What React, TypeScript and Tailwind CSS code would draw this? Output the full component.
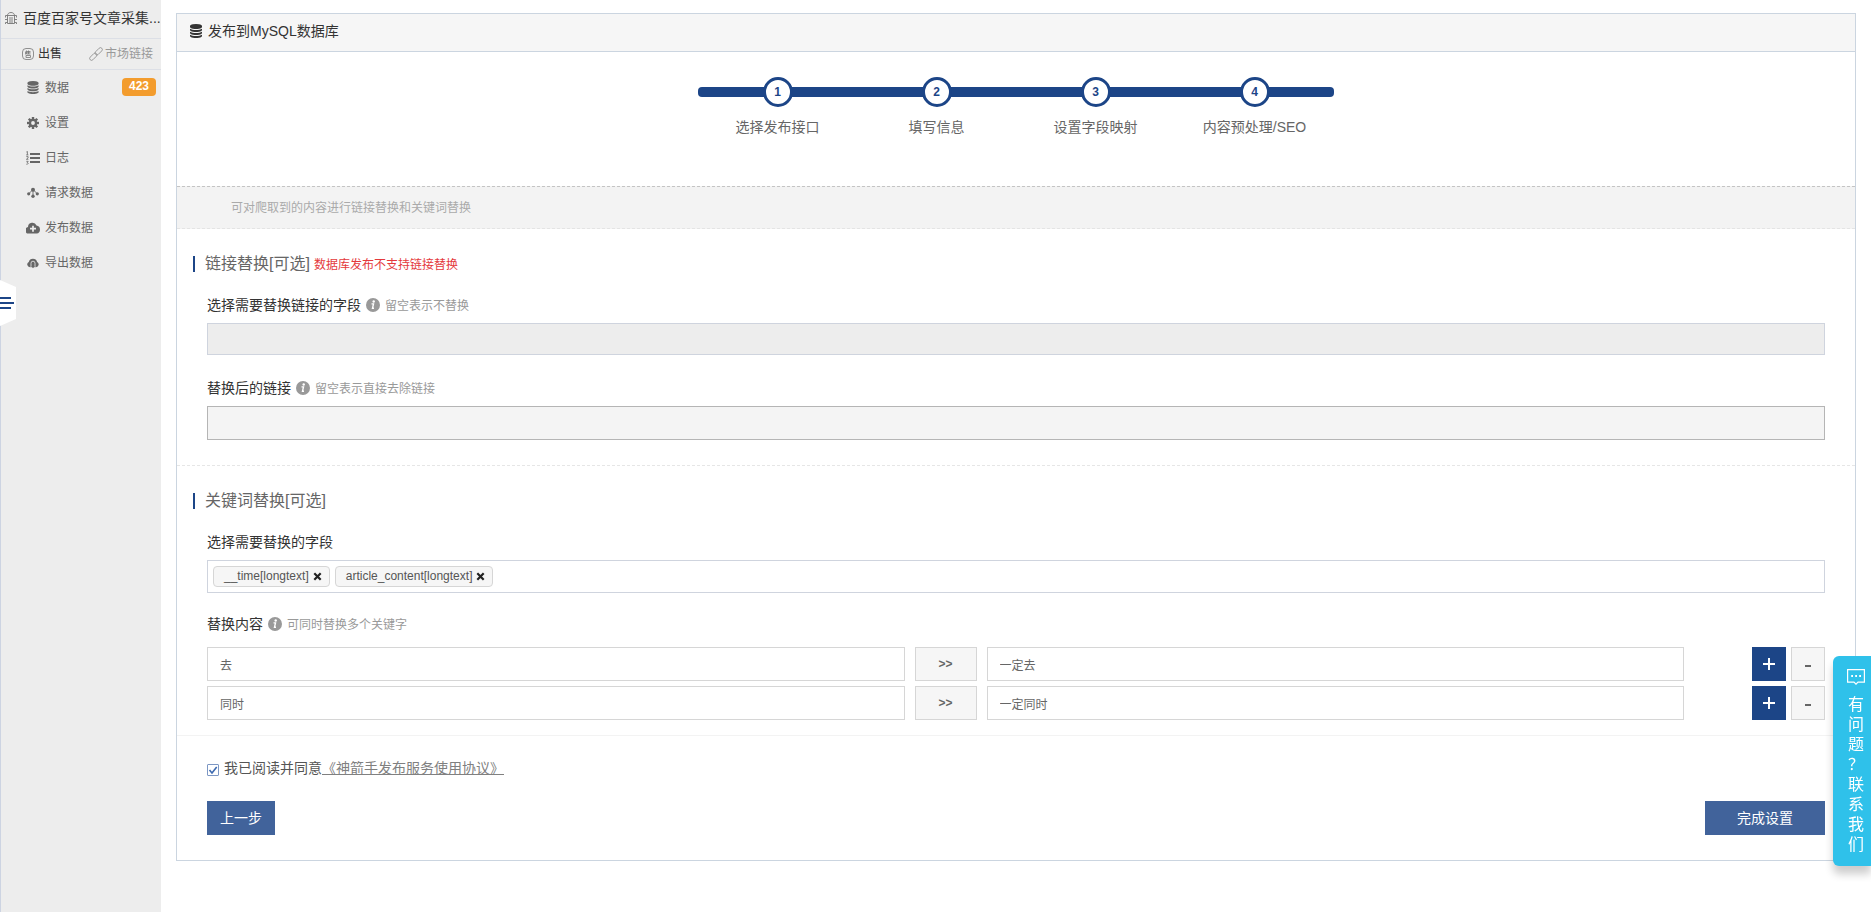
import { useState, type ReactNode } from "react";

type IconProps = { className?: string };

function DatabaseIcon({ className }: IconProps) {
  return (
    <svg viewBox="0 0 1536 1792" className={className} fill="currentColor" aria-hidden="true">
      <path d="M768 768q237 0 443-43t325-127v170q0 69-103 128t-280 93.5-385 34.5-385-34.5-280-93.5-103-128v-170q119 84 325 127t443 43zm0 768q237 0 443-43t325-127v170q0 69-103 128t-280 93.5-385 34.5-385-34.5-280-93.5-103-128v-170q119 84 325 127t443 43zm0-384q237 0 443-43t325-127v170q0 69-103 128t-280 93.5-385 34.5-385-34.5-280-93.5-103-128v-170q119 84 325 127t443 43zm0-1152q208 0 385 34.5t280 93.5 103 128v128q0 69-103 128t-280 93.5-385 34.5-385-34.5-280-93.5-103-128v-128q0-69 103-128t280-93.5 385-34.5z" />
    </svg>
  );
}

function BugIcon({ className }: IconProps) {
  return (
    <svg viewBox="0 0 12 14" className={className} fill="none" stroke="currentColor" strokeWidth=".9" aria-hidden="true">
      <path d="M2.500 4.500C2.500 .5 9.500 .5 9.500 4.500M.5 6.500v-2h11v2M2.500 4.500v8h7v-8M5 6v6.500M7 6v6.500M0 8.500h2.500M9.500 8.500H12M.5 13v-1.500h2M11.500 13v-1.500h-2" />
    </svg>
  );
}

function StampIcon({ className }: IconProps) {
  return (
    <svg viewBox="0 0 12 12" className={className} fill="none" stroke="currentColor" strokeWidth=".8" aria-hidden="true">
      <rect x=".5" y=".5" width="11" height="11" rx="3.500" />
      <path d="M4.500 2.500v3.500h4M4.500 3.500h4M4.500 4.700h4M6.500 2.500V6M3.500 3.500v3M4 7.500h4.500v2H4z" />
    </svg>
  );
}

function LinkIcon({ className }: IconProps) {
  return (
    <svg viewBox="0 0 24 24" className={className} fill="none" stroke="currentColor" strokeWidth="1.600" aria-hidden="true">
      <g transform="rotate(-45 12 12)">
        <rect x="-2" y="8.800" width="15" height="6.400" rx="3.200" />
        <rect x="11" y="8.800" width="15" height="6.400" rx="3.200" />
      </g>
    </svg>
  );
}

function GearIcon({ className }: IconProps) {
  return (
    <svg viewBox="0 0 24 24" className={className} fill="currentColor" aria-hidden="true">
      {[0, 45, 90, 135, 180, 225, 270, 315].map((angle) => (
        <rect key={angle} x="9.600" y="0" width="4.800" height="6" transform={`rotate(${angle} 12 12)`} />
      ))}
      <path fillRule="evenodd" d="M12 3.500a8.500 8.500 0 1 0 0 17 8.500 8.500 0 0 0 0-17zm0 4.700a3.800 3.800 0 1 1 0 7.600 3.800 3.800 0 0 1 0-7.600z" />
    </svg>
  );
}

function ListIcon({ className }: IconProps) {
  return (
    <svg viewBox="0 0 14 14" className={className} fill="none" stroke="currentColor" aria-hidden="true">
      <path strokeWidth="2" d="M4 3h10M4 7h10M4 11h10" />
      <path strokeWidth=".8" d="M.4 1l1-.6v3.400M.2 3.900h2.200M.3 5.600h1.800v1.300L.4 8.300h2M.3 10.300h1.900l-1 1.300c1.600 0 1.200 2-.9 1.600" />
    </svg>
  );
}

function NodesIcon({ className }: IconProps) {
  return (
    <svg viewBox="0 0 12 12" className={className} fill="currentColor" aria-hidden="true">
      <circle cx="6" cy="2.700" r="2" />
      <circle cx="1.700" cy="6.800" r="1.600" />
      <circle cx="10.300" cy="6.800" r="1.600" />
      <circle cx="6" cy="9.300" r="1.700" />
      <path fill="none" stroke="currentColor" strokeWidth=".9" d="M6 2.500 1.700 6.800M6 2.500l4.300 4.300M6 2.500v7" />
    </svg>
  );
}

function CloudPlusIcon({ className }: IconProps) {
  return (
    <svg viewBox="0 0 14 12" className={className} fill="currentColor" aria-hidden="true">
      <path d="M3.400 11.500A3.300 3.300 0 0 1 2 5 4.400 4.400 0 0 1 10.500 3.600 4 4 0 0 1 10.700 11.500z" />
      <path stroke="#ededed" strokeWidth="1.700" d="M7 3.700v6M4 6.700h6" />
    </svg>
  );
}

function CloudDownIcon({ className }: IconProps) {
  return (
    <svg viewBox="0 0 12 12" className={className} fill="currentColor" aria-hidden="true">
      <path d="M3 10.300A2.800 2.800 0 0 1 1.800 5a4.300 4.300 0 0 1 8.300 0A2.800 2.800 0 0 1 9 10.300z" />
      <path fill="none" stroke="#ededed" strokeWidth=".8" d="M4 11V6.200a2 2 0 0 1 4 0V11" />
      <path d="M5.500 6h1v3h1.200L6 11.200 4.300 9h1.200z" />
    </svg>
  );
}

function InfoIcon() {
  return (
    <svg viewBox="0 0 14 14" className="size-3.5 shrink-0 text-[#999]" aria-hidden="true">
      <circle cx="7" cy="7" r="7" fill="currentColor" />
      <circle cx="7.700" cy="3.500" r="1.200" fill="#fff" />
      <path d="M5.500 5.900h2l-1 4.300h1.500" fill="none" stroke="#fff" strokeWidth="1.400" />
    </svg>
  );
}

function CloseIcon() {
  return (
    <svg viewBox="0 0 9 9" className="size-2.25" fill="none" stroke="currentColor" strokeWidth="2.200" aria-hidden="true">
      <path d="M1.300 1.300l6.400 6.400M7.700 1.300 1.300 7.700" />
    </svg>
  );
}

function ChatIcon() {
  return (
    <svg viewBox="0 0 18 16" className="h-4 w-[18px]" fill="none" stroke="currentColor" strokeWidth="1.200" aria-hidden="true">
      <path d="M.6.600h16.800v12.600H11l-2 2-2-2H.6z" />
      <path strokeWidth="1.800" strokeDasharray="1.800 2.200" d="M4.200 7h10" />
    </svg>
  );
}

const menu = [
  { label: "数据", icon: <DatabaseIcon className="h-[13px] w-3" />, badge: "423" },
  { label: "设置", icon: <GearIcon className="size-3" /> },
  { label: "日志", icon: <ListIcon className="size-3.5" /> },
  { label: "请求数据", icon: <NodesIcon className="size-3" /> },
  { label: "发布数据", icon: <CloudPlusIcon className="h-3 w-3.5" /> },
  { label: "导出数据", icon: <CloudDownIcon className="size-3" /> },
];

const steps = ["选择发布接口", "填写信息", "设置字段映射", "内容预处理/SEO"];

function Sidebar() {
  return (
    <aside className="relative w-[161px] shrink-0 border-l border-[#cdd4e2] bg-[#ededed]">
      <h1 className="flex h-[39px] items-center gap-1.5 border-b border-[#dcdfe6] pb-0.5 pl-1 text-sm whitespace-nowrap text-[#333]">
        <BugIcon className="h-3.5 w-3 shrink-0 text-[#777]" />
        百度百家号文章采集...
      </h1>
      <div className="flex h-[31px] items-center justify-between border-b border-[#dcdfe6] pr-2 pl-[21px] text-xs">
        <a href="#sell" className="flex items-center gap-1 text-[#333]">
          <StampIcon className="size-3 text-[#777]" />
          出售
        </a>
        <a href="#market" className="flex items-center gap-0.5 text-[#999]">
          <LinkIcon className="size-3.5" />
          市场链接
        </a>
      </div>
      <nav>
        {menu.map(({ label, icon, badge }) => (
          <a key={label} href="#menu" className="flex h-[35px] items-center gap-1 pr-[5px] pl-6 text-xs text-[#666]">
            <span className="flex w-4 shrink-0 justify-center">{icon}</span>
            {label}
            {badge && (
              <span className="mb-px ml-auto h-[18px] w-[34px] rounded-sm bg-[#f39c2d] text-center leading-4 font-bold text-white">
                {badge}
              </span>
            )}
          </a>
        ))}
      </nav>
      <button type="button" aria-label="收起菜单" className="absolute top-[280px] -left-px h-[46px] w-4">
        <svg viewBox="0 0 16 46" className="h-[46px] w-4" aria-hidden="true">
          <path d="M0 0l16 7v32L0 46z" fill="#fff" />
          <path d="M0 18h11M0 23h14M0 28h11" stroke="#1c4587" strokeWidth="2" />
        </svg>
      </button>
    </aside>
  );
}

function Steps() {
  return (
    <div className="mx-auto grid h-[134px] w-[636px] content-start pt-[25px]">
      <div className="col-start-1 row-start-1 mt-2.5 h-2.5 rounded bg-[#1c4587]" />
      <ol className="col-start-1 row-start-1 grid grid-cols-4">
        {steps.map((step, i) => (
          <li key={step} className="flex flex-col items-center gap-2.5 text-sm text-[#666]">
            <span className="flex size-[30px] items-center justify-center rounded-full border-3 border-[#1c4587] bg-white text-xs font-bold text-[#1c4587]">
              {i + 1}
            </span>
            {step}
          </li>
        ))}
      </ol>
    </div>
  );
}

function SectionTitle({ children, note }: { children: ReactNode; note?: string }) {
  return (
    <h2 className="ml-4 flex h-6 items-center text-base text-[#666]">
      <span className="mr-2.5 h-4 w-0.5 bg-[#1c4587]" />
      {children}
      {note && <small className="mt-0.5 ml-1 text-xs text-[#e4393c]">{note}</small>}
    </h2>
  );
}

function FieldLabel({ id, text, hint }: { id: string; text: string; hint?: string }) {
  return (
    <div className="flex h-5 items-center gap-[5px] text-xs text-[#999]">
      <label htmlFor={id} className="text-sm text-[#333]">
        {text}
      </label>
      {hint && (
        <>
          <InfoIcon />
          <span className="pt-px">{hint}</span>
        </>
      )}
    </div>
  );
}

function Tag({ text }: { text: string }) {
  return (
    <span className="flex h-[21px] items-center gap-1 rounded border border-[#d6d6d6] bg-[#f6f6f6] pr-[7px] pl-2.5 text-xs text-[#555]">
      {text}
      <button type="button" aria-label={`移除 ${text}`} className="text-[#222]">
        <CloseIcon />
      </button>
    </span>
  );
}

const boxClass = "h-[34px] border border-[#d6d6d6] text-xs text-[#666]";

function ReplaceRow({ id, from, to }: { id: string; from: string; to: string }) {
  return (
    <div className="flex gap-2.5">
      <input id={id} aria-label="关键词" defaultValue={from} className={`${boxClass} min-w-0 flex-1 px-3 outline-none`} />
      <span className={`${boxClass} flex w-[62px] items-center justify-center bg-[#f6f6f6] font-bold`}>&gt;&gt;</span>
      <input aria-label="替换为" defaultValue={to} className={`${boxClass} min-w-0 flex-1 px-3 outline-none`} />
      <div className="flex w-[131px] justify-end gap-[5px]">
        <button type="button" aria-label="添加" className="flex size-[34px] items-center justify-center bg-[#1c4587] text-white">
          <svg viewBox="0 0 12 12" className="size-3" stroke="currentColor" strokeWidth="2" aria-hidden="true">
            <path d="M6 0v12M0 6h12" />
          </svg>
        </button>
        <button type="button" aria-label="删除" className="flex size-[34px] items-center justify-center border border-[#d6d6d6] bg-[#f6f6f6] pt-1 text-[#666]">
          <svg viewBox="0 0 6 2" className="h-0.5 w-1.5" fill="currentColor" aria-hidden="true">
            <path d="M0 0h6v2H0z" />
          </svg>
        </button>
      </div>
    </div>
  );
}

export default function App() {
  const [agreed, setAgreed] = useState(true);
  return (
    <div className="flex min-h-screen bg-white font-['Liberation_Sans','Noto_Sans_CJK_SC',sans-serif] text-[#333]">
      <Sidebar />
      <main className="min-w-0 flex-1 px-[15px] pt-[13px]">
        <form className="border border-[#cbd5e0]" onSubmit={(e) => e.preventDefault()}>
          <header className="flex h-[38px] items-center gap-1.5 border-b border-[#cbd5e0] bg-[#f6f6f6] px-[13px] pb-1 text-sm">
            <DatabaseIcon className="h-3.5 w-3" />
            发布到MySQL数据库
          </header>
          <Steps />
          <p className="flex h-[43px] items-center border-t border-b border-dashed border-t-[#c4c4c4] border-b-[#e4e4e4] bg-[#f3f3f3] pl-[54px] text-xs text-[#aaa]">
            可对爬取到的内容进行链接替换和关键词替换
          </p>

          <section className="border-b border-dashed border-[#e6e6e6] pt-[23px] pb-[25px]">
            <SectionTitle note="数据库发布不支持链接替换">链接替换[可选]</SectionTitle>
            <div className="px-[30px] pt-[19px]">
              <FieldLabel id="link-fields" text="选择需要替换链接的字段" hint="留空表示不替换" />
              <input id="link-fields" disabled className="mt-2 block h-8 w-full border border-[#cfd4de] bg-[#ededed] px-3 text-xs" />
            </div>
            <div className="px-[30px] pt-[23px]">
              <FieldLabel id="link-target" text="替换后的链接" hint="留空表示直接去除链接" />
              <input id="link-target" disabled className="mt-2 block h-[34px] w-full border border-[#b5b5b5] bg-[#f4f4f4] px-3 text-xs" />
            </div>
          </section>

          <section className="border-b border-[#f3f3f3] pt-[23px] pb-[15px]">
            <SectionTitle>关键词替换[可选]</SectionTitle>
            <div className="px-[30px] pt-[19px]">
              <FieldLabel id="keyword-fields" text="选择需要替换的字段" />
              <div className="mt-2 flex h-[33px] items-center gap-[5px] border border-[#cfd4de] pb-px pl-[5px]">
                <Tag text="__time[longtext]" />
                <Tag text="article_content[longtext]" />
                <input id="keyword-fields" className="h-6 min-w-0 flex-1 text-xs outline-none" />
              </div>
            </div>
            <div className="px-[30px] pt-[21px]">
              <FieldLabel id="replace-1" text="替换内容" hint="可同时替换多个关键字" />
              <div className="mt-[13px] flex flex-col gap-[5px]">
                <ReplaceRow id="replace-1" from="去" to="一定去" />
                <ReplaceRow id="replace-2" from="同时" to="一定同时" />
              </div>
            </div>
          </section>

          <footer className="px-[30px] pt-[22px] pb-[25px]">
            <div className="flex items-center gap-[5px] text-sm text-[#555]">
              <span className="mt-1 grid size-3">
                <input
                  id="agree"
                  type="checkbox"
                  checked={agreed}
                  onChange={(e) => setAgreed(e.target.checked)}
                  className="col-start-1 row-start-1 size-3 appearance-none rounded-[1px] border border-[#7c97c4] bg-white"
                />
                {agreed && (
                  <svg viewBox="0 0 12 12" className="pointer-events-none col-start-1 row-start-1 size-3" fill="none" stroke="#3d6ab0" strokeWidth="1.600" aria-hidden="true">
                    <path d="M2.500 6l2.500 3 4.700-6" />
                  </svg>
                )}
              </span>
              <p>
                <label htmlFor="agree">我已阅读并同意</label>
                <a href="#agreement" className="text-[#808080] underline">
                  《神箭手发布服务使用协议》
                </a>
              </p>
            </div>
            <div className="mt-[23px] flex justify-between text-sm text-white">
              <button type="button" className="h-[34px] w-[68px] bg-[#41639b]">
                上一步
              </button>
              <button type="submit" className="h-[34px] w-[120px] bg-[#41639b]">
                完成设置
              </button>
            </div>
          </footer>
        </form>
      </main>
      <button
        type="button"
        className="fixed top-[656px] right-0 flex h-[210px] w-[38px] flex-col items-center gap-2.5 rounded-l-md bg-[#2fc1ea] pt-[13px] pl-2 text-base leading-5 text-white shadow-[0_8px_8px_rgba(0,0,0,0.2)]"
      >
        <ChatIcon />
        <span className="flex flex-col items-center">
          {Array.from("有问题？联系我们").map((char) => (
            <span key={char}>{char}</span>
          ))}
        </span>
      </button>
    </div>
  );
}
